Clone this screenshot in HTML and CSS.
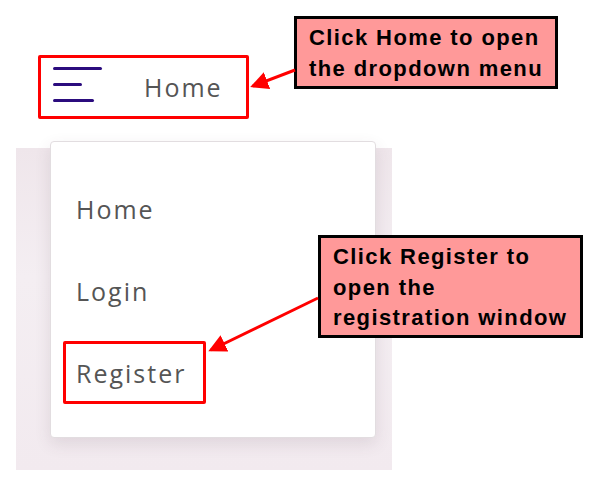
FILE: index.html
```html
<!DOCTYPE html>
<html>
<head>
<title>Menu Guide</title>
<link rel="stylesheet" href="styles.css">
</head>
<body>
<div id="guide">
    <!-- top nav bar -->
    <div class="navbar mark">
        <svg class="burger" width="50" height="40" viewBox="0 0 50 40">
            <rect x="0" y="0" width="49" height="3" rx="1.5"/>
            <rect x="0" y="16" width="29" height="3" rx="1.5"/>
            <rect x="0" y="32" width="41" height="3" rx="1.5"/>
        </svg>
        <span class="nav-title">Home</span>
    </div>

    <!-- dropdown menu -->
    <div class="stage">
        <div class="menu-card">
            <div class="menu-item">Home</div>
            <div class="menu-item">Login</div>
            <div class="menu-item"><span class="mark mark-item">Register</span></div>
        </div>
    </div>

    <!-- callouts -->
    <div class="callout callout-home">Click Home to open<br>the dropdown menu</div>
    <div class="callout callout-register">Click Register to<br>open the<br>registration window</div>

    <svg class="arrows" width="598" height="484" viewBox="0 0 598 484">
        <defs>
            <marker id="head" markerWidth="6" markerHeight="6" refX="5" refY="3" orient="auto" markerUnits="strokeWidth">
                <path d="M0,0 L6,3 L0,6 z" fill="#ff0000"/>
            </marker>
        </defs>
        <line x1="295" y1="70" x2="253" y2="86" stroke="#ff0000" stroke-width="3" marker-end="url(#head)"/>
        <line x1="318" y1="298" x2="211" y2="350" stroke="#ff0000" stroke-width="3" marker-end="url(#head)"/>
    </svg>
</div>
</body>
</html>
```

FILE: styles.css
```css
body {
    margin: 0;
    background-color: white;
    font-family: "Open Sans", "Noto Sans", sans-serif;
}
#guide {
    position: relative;
    width: 598px;
    height: 484px;
    overflow: hidden;
}
.mark {
    border: 3px solid #ff0000;
    border-radius: 2px;
    box-sizing: border-box;
}
.navbar {
    display: flex;
    align-items: center;
    margin: 55px 0 0 38px;
    width: 211px;
    height: 64px;
    padding-left: 12px;
}
.burger {
    fill: #2b0c7e;
}
.nav-title {
    margin-left: 41px;
    font-size: 25px;
    color: #555555;
    letter-spacing: 2px;
}
.stage {
    margin: 29px 0 0 16px;
    width: 376px;
    height: 322px;
    background: linear-gradient(180deg, #efe6eb 0%, #f4eef2 40%, #f2eaef 100%);
    padding-left: 34px;
    box-sizing: border-box;
}
.menu-card {
    position: relative;
    top: -7px;
    width: 326px;
    height: 297px;
    background-color: white;
    border: 1px solid #e2dde0;
    border-radius: 4px;
    box-shadow: 0 6px 16px rgba(80, 60, 70, 0.12);
    box-sizing: border-box;
    padding-top: 50px;
}
.menu-item {
    height: 82px;
    padding-left: 25px;
    font-size: 25px;
    color: #555555;
    letter-spacing: 2px;
    line-height: 34px;
}
.mark-item {
    display: inline-block;
    margin-left: -13px;
    margin-top: -16px;
    width: 143px;
    height: 63px;
    padding: 12px 0 0 10px;
}
.callout {
    position: absolute;
    box-sizing: border-box;
    background-color: #ff9999;
    border: 3px solid black;
    font-family: "Liberation Sans", Arial, sans-serif;
    font-weight: bold;
    font-size: 22px;
    letter-spacing: 1.4px;
    line-height: 30.5px;
    color: black;
    padding-left: 12px;
}
.callout-home {
    left: 294px;
    top: 16px;
    width: 264px;
    height: 73px;
    padding-top: 4px;
}
.callout-register {
    left: 318px;
    top: 235px;
    width: 265px;
    height: 103px;
    padding-top: 4px;
}
.arrows {
    position: absolute;
    left: 0;
    top: 0;
}
```
